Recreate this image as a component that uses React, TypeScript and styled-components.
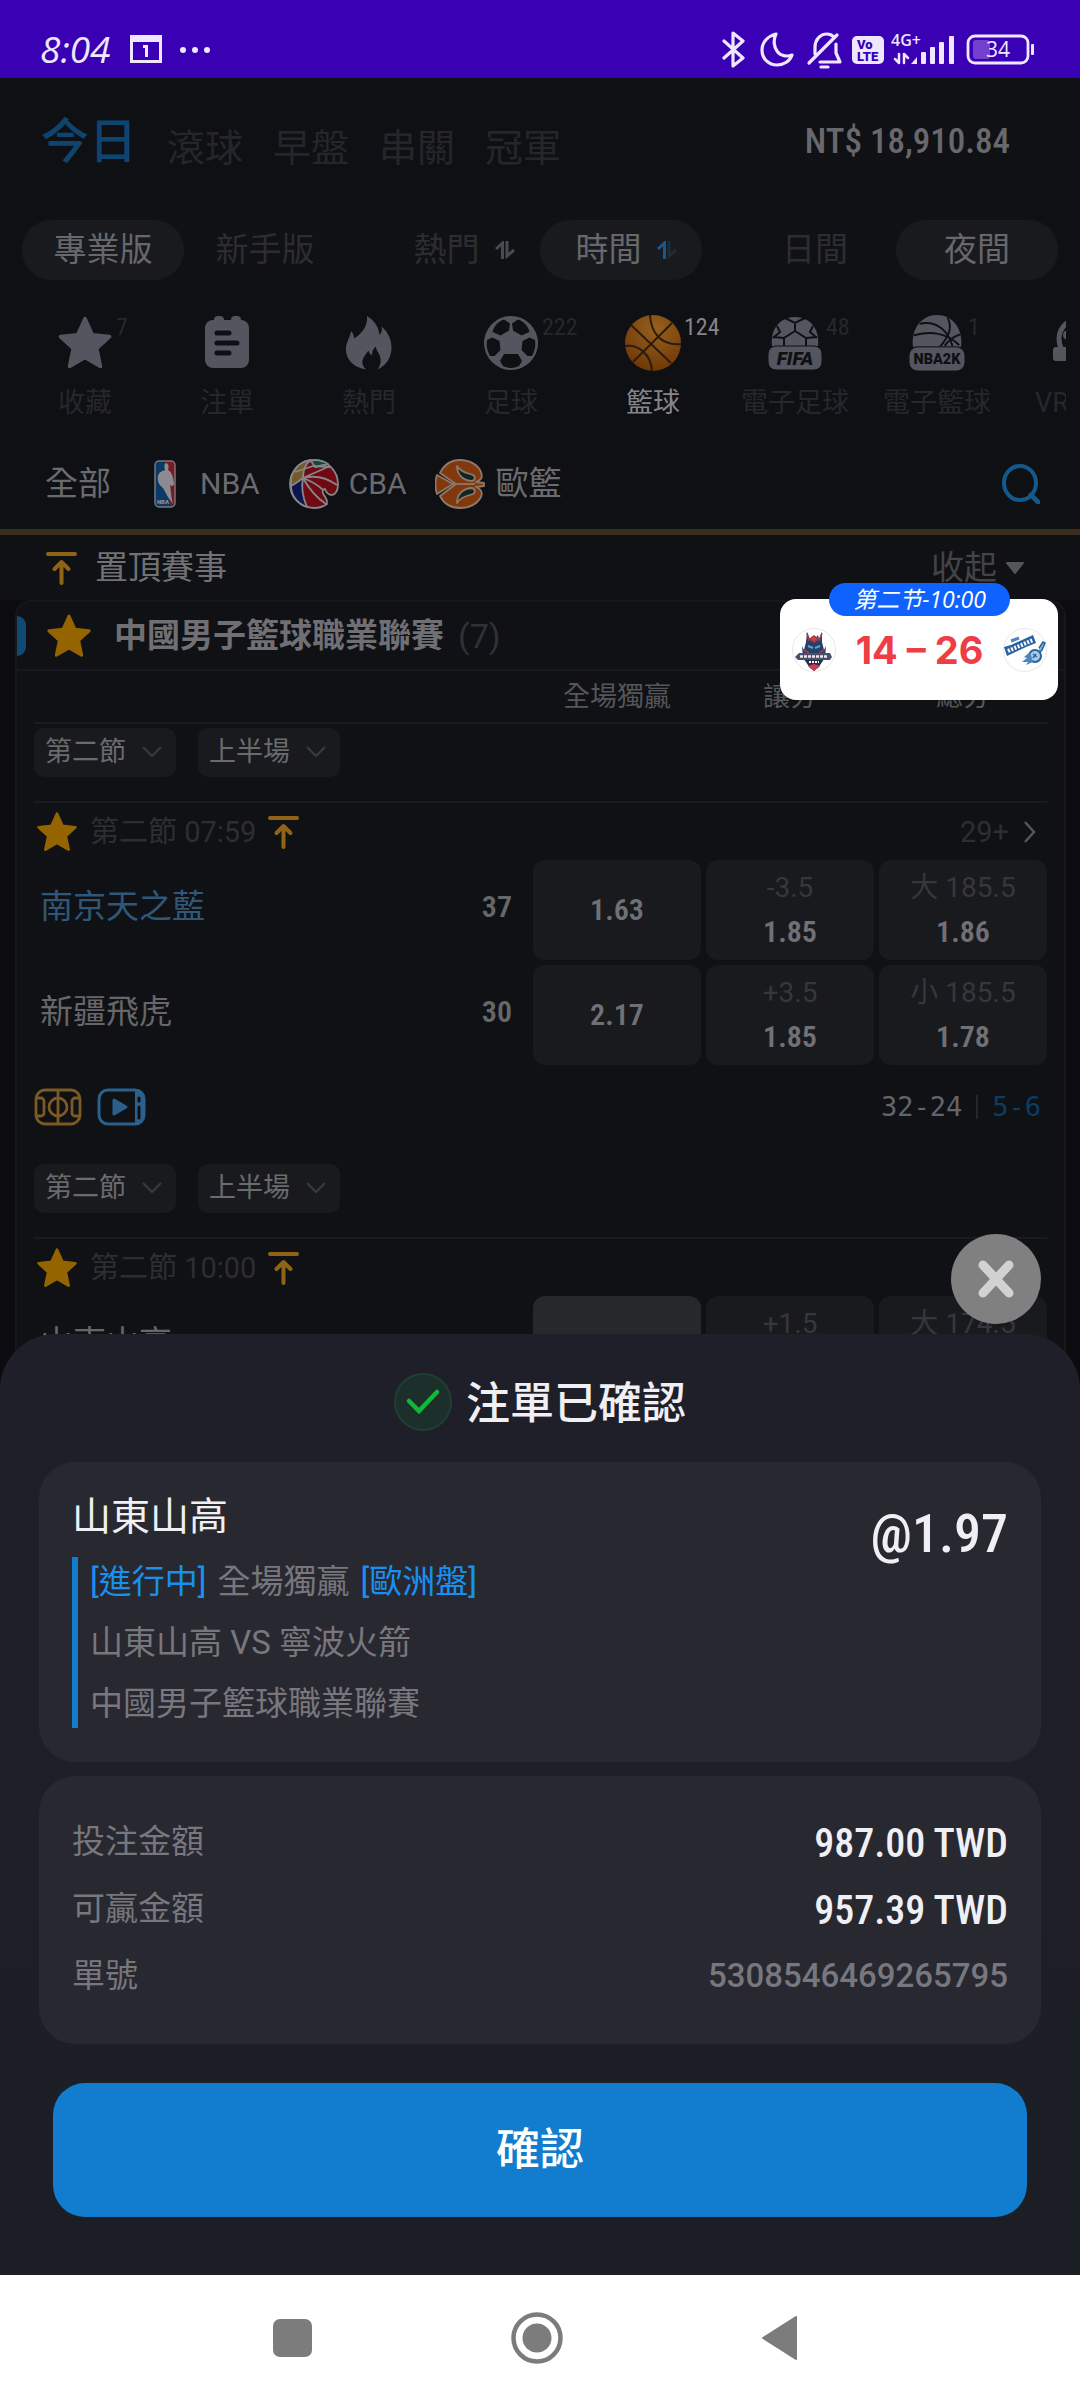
import React from "react";
import styled, { createGlobalStyle, css } from "styled-components";

const SANS = 'Roboto, "Noto Sans CJK TC", sans-serif';
const NARROW = '"Liberation Sans Narrow", "Roboto Condensed", Roboto, "Noto Sans CJK TC", sans-serif';

const Global = createGlobalStyle`
  * { box-sizing: border-box; }
  html, body { margin: 0; padding: 0; background: #0c0c10; }
  body { font-family: ${SANS}; color: #626267; }
  button, select { font-family: inherit; border: 0; background: none; padding: 0; margin: 0; color: inherit; }
  a { text-decoration: none; color: inherit; }
  svg { display: block; flex: none; }
  h1, h2, h3, p, dl, dd, dt { margin: 0; font-weight: 400; }
`;

/* ---------- shell ---------- */

const Phone = styled.div`
  min-height: 100vh;
  display: flex;
  flex-direction: column;
`;

const StatusBar = styled.header`
  height: 78px;
  flex: none;
  padding: 20px 46px 0 40px;
  display: flex;
  justify-content: space-between;
  background: #3a00b3;
  color: #efe6ff;
`;

const StatusGroup = styled.div`
  height: 58px;
  display: flex;
  align-items: center;
  gap: 20px;
`;

const Clock = styled.span`
  font: italic 400 37px/58px "Open Sans", sans-serif;
`;

const Stage = styled.main`
  flex: 1;
  display: grid;
  position: relative;
  overflow: hidden;
`;

const Page = styled.div`
  grid-area: 1 / 1;
  min-width: 0;
  background: #0c0c10;
`;

const Top = styled.div`
  background: #0f1014;
`;

/* ---------- header ---------- */

const Header = styled.div`
  height: 139px;
  padding: 34px 30px 0 41px;
  display: flex;
  justify-content: space-between;
  align-items: flex-start;
`;

const DayTabs = styled.nav`
  display: flex;
  align-items: flex-end;
  gap: 30px;
`;

const DayTab = styled.a<{ $active?: boolean }>`
  font-size: 38px;
  line-height: 48px;
  color: #25262a;
  ${(p) =>
    p.$active &&
    css`
      font-size: 48px;
      line-height: 60px;
      font-weight: 500;
      color: #0e4470;
    `}
`;

const Balance = styled.div`
  padding: 0 40px 0 25px;
  border-radius: 32px;
  background: #101115;
  font: 500 35px/60px ${NARROW};
  color: #68686d;
`;

const Toggles = styled.div`
  padding: 0 19px;
  display: grid;
  grid-template-columns: repeat(3, minmax(0, 1fr));
  gap: 26px;
`;

const Toggle = styled.div`
  padding: 3px;
  display: grid;
  grid-template-columns: 1fr 1fr;
  border-radius: 33px;
  background: #101115;
`;

const ToggleItem = styled.button<{ $active?: boolean; $sortable?: boolean }>`
  height: 60px;
  padding-left: ${(p) => (p.$sortable ? 10 : 0)}px;
  display: flex;
  align-items: center;
  justify-content: center;
  gap: 15px;
  border-radius: 30px;
  font-size: 33px;
  line-height: 60px;
  color: ${(p) => (p.$active ? "#67676c" : "#2c2d31")};
  background: ${(p) => (p.$active ? "#191a1e" : "transparent")};
`;

/* ---------- sports ---------- */

const Sports = styled.nav`
  margin: 0 14px;
  padding-top: 32px;
  display: flex;
  overflow: hidden;
`;

const Sport = styled.a<{ $active?: boolean }>`
  position: relative;
  flex: 0 0 142px;
  display: flex;
  flex-direction: column;
  align-items: center;
  gap: 14px;
  font-size: 27px;
  line-height: 36px;
  white-space: nowrap;
  color: ${(p) => (p.$active ? "#85858a" : "#26272b")};
`;

const Count = styled.span`
  position: absolute;
  left: 102px;
  top: 0;
  font: 400 24px/24px ${NARROW};
`;

const Leagues = styled.div`
  height: 114px;
  padding: 18px 40px 0 45px;
  display: flex;
  align-items: center;
  justify-content: space-between;
  border-bottom: 6px solid #3a2f1e;
`;

const LeagueList = styled.nav`
  display: flex;
  align-items: center;
  gap: 29px;
`;

const League = styled.a<{ $latin?: boolean; $gap?: number; $inset?: number }>`
  display: flex;
  align-items: center;
  gap: ${(p) => p.$gap ?? 10}px;
  padding-left: ${(p) => p.$inset ?? 0}px;
  font-size: ${(p) => (p.$latin ? 30 : 33)}px;
  line-height: 40px;
  color: #6a6a6f;
`;

const Pinned = styled.div`
  height: 65px;
  padding: 0 56px 0 46px;
  display: flex;
  align-items: center;
  gap: 18px;
  background: #101115;
  color: #717176;
`;

const PinnedTitle = styled.h2`
  flex: 1;
  font-size: 33px;
  line-height: 60px;
`;

const Fold = styled.button`
  display: flex;
  align-items: center;
  gap: 9px;
  font-size: 33px;
  line-height: 60px;
  color: #434448;
`;

/* ---------- league card ---------- */

const Card = styled.section`
  margin: 0 14px 0 15px;
  border: 2px solid #15171b;
  border-bottom: 0;
  border-radius: 16px 16px 0 0;
  overflow: hidden;
  background: #0f1114;
`;

const CardTitle = styled.div`
  height: 69px;
  display: flex;
  align-items: center;
  border-bottom: 2px solid #17191d;

  &::before {
    content: "";
    width: 9px;
    height: 40px;
    margin-right: 20px;
    border-radius: 0 9px 9px 0;
    background: #0f4a75;
  }
`;

const CardName = styled.h3`
  margin-left: 22px;
  font-size: 33px;
  line-height: 60px;
  font-weight: 700;
  color: #6f6f74;
`;

const Total = styled.span`
  margin-left: 14px;
  font-size: 34px;
  line-height: 60px;
  color: #303135;
`;

const Columns = styled.div`
  margin: 0 17px;
  display: grid;
  grid-template-columns: minmax(0, 1fr) repeat(3, 168px);
  gap: 5px;
`;

const ColumnHead = styled(Columns)`
  height: 53px;
  border-bottom: 2px solid #191b1f;
  font-size: 27px;
  line-height: 52px;
  text-align: center;
  color: #55565a;
`;

const Periods = styled.div<{ $top: number }>`
  margin: 0 17px;
  padding: ${(p) => p.$top}px 0 24px;
  display: flex;
  gap: 22px;
  border-bottom: 2px solid #191b1f;
`;

const PeriodBox = styled.label`
  position: relative;
  display: block;

  svg {
    position: absolute;
    right: 14px;
    top: 18px;
    pointer-events: none;
  }
`;

const PeriodSelect = styled.select`
  appearance: none;
  display: block;
  width: 142px;
  height: 49px;
  padding: 0 0 0 11px;
  border-radius: 10px;
  background: #191a1e;
  font-size: 27px;
  line-height: 49px;
  color: #6a6a6f;
`;

const MatchHead = styled.div`
  height: 57px;
  padding: 0 28px 0 19px;
  display: flex;
  align-items: center;
  gap: 12px;
  font-size: 29px;
  line-height: 40px;
  color: #2d2e32;
`;

const More = styled.a`
  margin-left: auto;
  display: flex;
  align-items: center;
  gap: 15px;
`;

const Team = styled.div<{ $home?: boolean }>`
  height: 94px;
  padding: 0 16px 0 6px;
  display: flex;
  align-items: center;
  justify-content: space-between;
  font-size: 33px;
  line-height: 40px;
  color: ${(p) => (p.$home ? "#2f5878" : "#66676b")};
`;

const Points = styled.span`
  font: 600 30px/40px ${NARROW};
  color: #66676b;
`;

const Odds = styled.button<{ $picked?: boolean }>`
  height: 100px;
  display: flex;
  flex-direction: column;
  align-items: center;
  justify-content: center;
  border-radius: 12px;
  background: ${(p) => (p.$picked ? "#27282b" : "#191a1e")};
`;

const Line = styled.span`
  font-size: 28px;
  line-height: 44px;
  color: #36373b;
`;

const Price = styled.span`
  font: 600 30px/44px ${NARROW};
  color: #707075;
`;

const MatchFoot = styled.div`
  height: 84px;
  padding: 0 23px 0 17px;
  display: flex;
  align-items: center;
  gap: 15px;
`;

const Quarters = styled.div`
  margin-left: auto;
  display: flex;
  align-items: center;
  gap: 14px;
  font: 400 27px/40px "DejaVu Sans Mono", monospace;
  color: #64656a;
`;

const Rule = styled.span`
  width: 2px;
  height: 24px;
  background: #25262a;
`;

const Current = styled.span`
  color: #0d3c63;
`;

/* ---------- floating score ---------- */

const Floating = styled.aside`
  position: absolute;
  top: 521px;
  right: 22px;
  width: 278px;
  height: 101px;
  padding: 29px 11px 0 12px;
  display: flex;
  justify-content: space-between;
  align-items: flex-start;
  border-radius: 16px;
  background: #fff;
`;

const FloatingTime = styled.span`
  position: absolute;
  top: -16px;
  left: 49px;
  width: 181px;
  height: 33px;
  border-radius: 17px;
  background: #1062fe;
  color: #fff;
  text-align: center;
  font: italic 400 23px/33px "Open Sans", "Noto Sans CJK SC", sans-serif;
`;

const FloatingScore = styled.strong`
  font: 700 38px/44px Inter, sans-serif;
  color: #ee3d45;
`;

/* ---------- bet slip ---------- */

const Sheet = styled.section`
  grid-area: 1 / 1;
  align-self: end;
  position: relative;
  min-width: 0;
  padding: 38px 39px 58px;
  border-radius: 56px 56px 0 0;
  background: linear-gradient(#1f1f29, #1c1e26);
  color: #efeff4;
`;

const Close = styled.button`
  position: absolute;
  top: -100px;
  right: 39px;
  width: 90px;
  height: 90px;
  display: grid;
  place-items: center;
  border-radius: 45px;
  background: #808080;
`;

const SheetTitle = styled.div`
  height: 60px;
  margin-bottom: 30px;
  display: flex;
  align-items: center;
  justify-content: center;
  gap: 14px;
`;

const SheetName = styled.h1`
  padding-top: 4px;
  font-size: 44px;
  line-height: 60px;
  font-weight: 500;
`;

const Panel = styled.div`
  border-radius: 36px;
  background: #282831;
`;

const Bet = styled(Panel)`
  margin-bottom: 14px;
  padding: 30px 33px 34px;
  display: flex;
  justify-content: space-between;
`;

const Pick = styled.h2`
  margin-bottom: 15px;
  font-size: 39px;
  line-height: 50px;
`;

const BetInfo = styled.div`
  padding: 6px 0 6px 12px;
  display: grid;
  gap: 24px;
  border-left: 6px solid #127cce;
  font-size: 33px;
  line-height: 37px;
  color: #77777d;
`;

const BetLine = styled.p`
  display: flex;
  gap: 11px;
`;

const Accent = styled.span`
  color: #1890f0;
`;

const BetPrice = styled.strong`
  margin-top: 12px;
  font: 500 54px/60px ${NARROW};
`;

const Amounts = styled(Panel).attrs({ as: "dl" })`
  padding: 32px 33px 35px;
`;

const Amount = styled.div`
  height: 67px;
  display: flex;
  align-items: center;
  justify-content: space-between;
  font-size: 33px;
  line-height: 60px;
  color: #77777d;
`;

const Money = styled.dd`
  padding-top: 4px;
  font: 500 40px/60px ${NARROW};
  color: #efeff4;
`;

const Serial = styled.dd`
  font-weight: 500;
`;

const Confirm = styled.button`
  width: calc(100% - 28px);
  height: 134px;
  margin: 39px 14px 0;
  padding-bottom: 8px;
  display: block;
  border-radius: 32px;
  background: #127cce;
  font-size: 44px;
  font-weight: 500;
  color: #fff;
`;

const SystemNav = styled.nav`
  flex: none;
  height: 126px;
  padding: 0 283px 0 273px;
  display: flex;
  align-items: center;
  justify-content: space-between;
  background: #fff;
`;

/* ---------- icons ---------- */

const GOLD = "#8f6416";
const GREY = "#55555f";

const Star = ({ size, color }: { size: number; color: string }) => (
  <svg width={size} height={size} viewBox="0 0 24 24" fill={color} stroke={color} strokeWidth="1.6" strokeLinejoin="round">
    <path d="M12 1.6l3.1 6.9 7.4.8-5.5 5 1.6 7.7-6.6-3.8L5.400 22 7 14.300 1.500 9.300l7.400-.8z" />
  </svg>
);

const PinTop = () => (
  <svg width="31" height="34" viewBox="0 0 31 34" fill="none" stroke={GOLD} strokeWidth="4" strokeLinecap="round" strokeLinejoin="round">
    <path d="M2 3h27" />
    <path d="M15.500 32V12M8.500 18l7-7 7 7" />
  </svg>
);

const Sort = ({ color, down }: { color: string; down: string }) => (
  <svg width="20" height="18" viewBox="0 0 20 18" fill="none" strokeWidth="3">
    <path d="M1 8l6.500-6v16" stroke={color} />
    <path d="M12 0v15l7-6" stroke={down} />
  </svg>
);

const Chevron = () => (
  <svg width="20" height="12" viewBox="0 0 20 12" fill="none" stroke="#3a3b3f" strokeWidth="2">
    <path d="M1 1l9 9 9-9" />
  </svg>
);

const Slip = () => (
  <svg width="56" height="56" viewBox="0 0 56 56">
    <rect x="6" y="5" width="44" height="48" rx="8" fill={GREY} />
    <rect x="15" y="1" width="10" height="10" rx="4" fill={GREY} />
    <rect x="32" y="1" width="10" height="10" rx="4" fill={GREY} />
    <path d="M18 18h12M18 28h20M18 38h12" stroke="#0f1014" strokeWidth="5" strokeLinecap="round" />
  </svg>
);

const Flame = () => (
  <svg width="56" height="56" viewBox="0 0 56 56" fill={GREY}>
    <path d="M26 1c8 5 12 12 12.500 19 2-2 3-5 2-8.500C47 17 51 25 50.500 34c-.5 9-5 16-14 20.500 3-4 4-8 2.500-13-1-4-4-6-4-10-3 2-4 5-4 9-2-1-3-3-3.500-5-3 4-7 9-6 13 .4 2.500 2 4.500 3.500 6C13 52 6 46 5 36c-.8-8 4-13 5-20 2 2 3 4.500 3 7.500C20 19 27 12 26 1z" />
  </svg>
);

const Soccer = () => (
  <svg width="56" height="56" viewBox="0 0 56 56">
    <circle cx="28" cy="28" r="27" fill={GREY} />
    <g fill="#0f1014">
      <path d="M21 4.500l6 4-1 7-8.500 5-8-3.500C11 11 15 6.500 21 4.500z" />
      <path d="M35 4.500l-6 4 1 7 8.500 5 8-3.500C45 11 41 6.500 35 4.500z" />
      <path d="M4 25l5.500-2.500 7 3.500 1 9-6 6H7C4 36 3 30 4 25z" />
      <path d="M52 25l-5.500-2.500-7 3.500-1 9 6 6H49c3-5 4-11 3-16z" />
      <path d="M21 39h14l4 7-3 5c-5 2.500-11 2.500-16 0l-3-5z" />
    </g>
  </svg>
);

const Basketball = () => (
  <svg width="56" height="56" viewBox="0 0 56 56">
    <defs>
      <radialGradient id="ball" cx="0.55" cy="0.25" r="0.8">
        <stop offset="0" stopColor="#96601f" />
        <stop offset="1" stopColor="#6e3604" />
      </radialGradient>
    </defs>
    <circle cx="28" cy="28" r="28" fill="url(#ball)" />
    <path d="M6 10l40 38M47 8L8 47M25 0c1 18 11 31 31 29M0 31c13-2 26 8 27 25" fill="none" stroke="#2b1c12" strokeWidth="2" />
  </svg>
);

const Fifa = () => (
  <svg width="56" height="56" viewBox="0 0 56 56">
    <path d="M5 31C3 14 13 2 28 2s25 12 23 29z" fill={GREY} />
    <path d="M28 7v9M18 3l10 5 10-5M28 16l11 7M28 16l-11 7v8M39 23v8M17 23L6 22M39 23l11-1M10 11l3 6-7 6M46 11l-3 6 7 6" fill="none" stroke="#0f1014" strokeWidth="2" />
    <rect x="1" y="31" width="54" height="24" rx="8" fill={GREY} stroke="#0f1014" strokeWidth="1" />
    <text x="28" y="50" textAnchor="middle" fontFamily="Roboto, sans-serif" fontStyle="italic" fontWeight="900" fontSize="19" fill="#0f1014">FIFA</text>
  </svg>
);

const Nba2k = () => (
  <svg width="56" height="56" viewBox="0 0 58 58">
    <path d="M4 33C2 14 13 0 29 0s27 14 25 33z" fill={GREY} />
    <path d="M5 21c16-4 32-4 47 10M11 9c18-4 30 8 34 23M40 3c4 8 4 16-8 30M53 20c-6 2-12 6-16 12" fill="none" stroke="#0f1014" strokeWidth="2" />
    <rect x="0" y="33" width="58" height="25" rx="9" fill={GREY} stroke="#0f1014" strokeWidth="1" />
    <text x="29" y="51" textAnchor="middle" fontFamily="Roboto, sans-serif" fontWeight="900" fontSize="15" fill="#0f1014">NBA2K</text>
  </svg>
);

const VrBall = () => (
  <svg width="56" height="56" viewBox="0 0 56 56">
    <circle cx="28" cy="24" r="20" fill="none" stroke={GREY} strokeWidth="5" />
    <circle cx="17" cy="20" r="5" fill={GREY} />
    <rect x="2" y="32" width="52" height="14" rx="3" fill={GREY} />
  </svg>
);

const NbaLogo = () => (
  <svg width="22" height="48" viewBox="0 0 22 48">
    <rect x="1" y="1" width="20" height="46" rx="4" fill="#0c3a66" />
    <path d="M11 1h6a4 4 0 014 4v38a4 4 0 01-4 4c-1-8-3-14-5-18z" fill="#7a1a20" />
    <path d="M12 3c3 1 3 4 2 7 4 2 5 7 6 13 0 3-2 4-4 2 1 6 1 12 3 19-4-5-7-10-10-16-4-3-6-7-5-12 1-4 4-5 7-6-1-3-1-6 1-7z" fill="#8b8b90" />
    <rect x="1" y="1" width="20" height="46" rx="4" fill="none" stroke="#77777c" strokeWidth="1.500" />
    <text x="9" y="44" textAnchor="middle" fontFamily="Roboto, sans-serif" fontWeight="900" fontSize="6" fill="#8b8b90">NBA</text>
  </svg>
);

/* A ball whose lower right edge is bitten out by a hooked notch. */
const CbaLogo = () => (
  <svg width="50" height="50" viewBox="0 0 50 50" stroke="#86868a" strokeWidth="1.800" strokeLinejoin="round">
    <path d="M25 1A24 24 0 0149 25c0 6-2 10-6 11-4 0-6-3-7-6-2 0-3 2-2 4 1 4 5 5 4 11C34 48 30 49 25 49A24 24 0 0125 1z" fill="#700a12" />
    <path d="M2 19C5 8 13 2 22 1c-6 4-8 10-8 18L2 30z" fill="#75592a" />
    <path d="M2 27c4-2 8-5 12-8-2 10 0 20 4 29C9 45 2 37 2 27z" fill="#0b1650" />
    <path d="M22 2c6-2 12 0 17 3l-13 3z" fill="#0c4a3c" />
    <path d="M14 19L41 7M14 19c12-3 24 0 34 7M14 19c8 3 15 7 20 12M14 19c6 11 14 20 23 26M6 13l18-6 17 1" fill="none" />
  </svg>
);

/* Two lobes of a ball joined at the left, open towards the right. */
const EuroLogo = () => (
  <svg width="50" height="50" viewBox="0 0 50 50" stroke="#8f7868" strokeWidth="1.800" strokeLinejoin="round">
    <path d="M5 14C9 6 16 1 25 1c10 0 18 5 21 12 2 6 0 8-5 10l8 1v3l-8 1c5 2 7 5 5 10-4 7-11 11-21 11-9 0-16-4-20-12l16-12z" fill="#82380e" />
    <path d="M2 16l16 9L2 35c-2-6-2-13 0-19z" fill="#82380e" />
    <path d="M22 7c0 8 5 14 14 15 4 0 5-4 2-6-5-2-12-2-16-9zM22 44c0-8 5-14 14-15 4 0 5 4 2 6-5 2-12 2-16 9z" fill="#0f2426" />
    <path d="M18 25h22" fill="none" />
  </svg>
);

const Search = () => (
  <svg width="38" height="40" viewBox="0 0 38 40" fill="none" stroke="#135a8c" strokeWidth="4">
    <ellipse cx="18" cy="19" rx="16" ry="17" />
    <path d="M29 31l7 7" strokeWidth="5" strokeLinecap="round" />
  </svg>
);

const Court = () => (
  <svg width="48" height="38" viewBox="0 0 48 38" fill="none" stroke="#7b5a24" strokeWidth="2.800">
    <rect x="2" y="2" width="44" height="34" rx="9" />
    <path d="M24 2v34M2 10h5a3 3 0 013 3v12a3 3 0 01-3 3H2M46 10h-5a3 3 0 00-3 3v12a3 3 0 003 3h5" />
    <circle cx="24" cy="19" r="9" />
  </svg>
);

const Video = () => (
  <svg width="49" height="38" viewBox="0 0 49 38" fill="none" stroke="#2b5f8c" strokeWidth="3">
    <rect x="2" y="2" width="45" height="34" rx="9" />
    <path d="M39 2a8 8 0 018 8v18a8 8 0 01-8 8z" fill="#2b5f8c" strokeWidth="2" />
    <path d="M42 10v3M42 19v11" stroke="#0f1114" strokeLinecap="round" />
    <path d="M17 12l12 7-12 7z" fill="#2b5f8c" strokeLinejoin="round" />
  </svg>
);

const ShandongLogo = () => (
  <svg width="44" height="44" viewBox="0 0 44 44">
    <circle cx="22" cy="22" r="21.500" fill="#fff" stroke="#ece6e6" />
    <path d="M15 4l3 7 3-3 2 3 3-4 1 4 3-7v10l2 8 2-4-1 12-5 7-6 5-6-5-5-7-1-12 2 4 2-8z" fill="#27406a" />
    <path d="M18 11l4-3 4 3-4 3zM15 5l2 8M30 5l-3 8M12 22l5 3M32 22l-5 3" stroke="#a83a44" strokeWidth="1.500" fill="#c94545" />
    <path d="M16 18l5 2M28 18l-5 2" stroke="#5fa0c8" strokeWidth="2" />
    <path d="M3 29l4-4h31l2 4-2 3H6z" fill="#4a5068" />
    <path d="M8 28.500h28" stroke="#e8e8f0" strokeWidth="2.500" strokeDasharray="3 1" />
    <path d="M14 32h16l-3 7-5 4-5-4z" fill="#2a2c48" />
    <path d="M16 38l6-2 6 2-6 5z" fill="#cf3d55" />
    <path d="M17 34h10" stroke="#fff" strokeWidth="2" strokeDasharray="2 1" />
  </svg>
);

const RocketsLogo = () => (
  <svg width="44" height="44" viewBox="0 0 44 44">
    <circle cx="22" cy="22" r="21.500" fill="#fff" stroke="#ece6e6" />
    <path d="M1 19l7-2L30 7l3 8-10 4-19 9z" fill="#2a62a0" />
    <path d="M5 23l25-11" stroke="#fff" strokeWidth="4" strokeDasharray="2 1.500" />
    <path d="M8 13l8-3" stroke="#4d86bd" strokeWidth="3" />
    <path d="M36 20l4-6 2 1-3 7-3 3" fill="#7fb5dc" stroke="#2a62a0" strokeWidth="1.500" />
    <circle cx="32" cy="28" r="6" fill="#a9cbe6" stroke="#2a62a0" strokeWidth="2" />
    <path d="M27 24l-6 5 3 1-5 4h6l-2 3 7-3" fill="#4d86bd" />
    <path d="M30 26l4 3M30 30l3-4" stroke="#2a62a0" strokeWidth="1.500" />
  </svg>
);

const StatusIcons = () => (
  <svg width="312" height="40" viewBox="722 28 312 40" fill="none" stroke="#efe6ff" strokeWidth="3.200" strokeLinejoin="round" strokeLinecap="round">
    <path d="M724 40l19 17-10 8V32l10 8-19 17" />
    <path d="M776 33c-8 2-14 8-14 16 0 9 7 15 15 15 7 0 13-4 15-10-5 2-12 1-15-4-3-4-4-11-1-17z" />
    <path d="M815 53V46c0-7 5-13 12-13 3 0 5 1 7 3M836 43v9l4 9H820M837 34l-28 28M821 66h7" />
    <rect x="852" y="35" width="32" height="28" rx="5" fill="#efe6ff" stroke="none" />
    <g fill="#3a00b3" stroke="none" fontFamily="Roboto, sans-serif" fontWeight="900">
      <text x="857" y="48" fontSize="13">Vo</text>
      <text x="857" y="60" fontSize="13">LTE</text>
    </g>
    <text x="891" y="45" fill="#efe6ff" stroke="none" fontFamily="Open Sans, sans-serif" fontWeight="600" fontSize="16">4G+</text>
    <path d="M899 53v9l-4-4M904 62v-9l4 4" strokeWidth="2.500" />
    <g fill="#efe6ff" stroke="none">
      <path d="M911 63l6-7v7z" />
      <rect x="921" y="51" width="5" height="12" rx="1" />
      <rect x="930" y="46" width="5" height="17" rx="1" />
      <rect x="939" y="41" width="5" height="22" rx="1" />
      <rect x="949" y="35" width="5" height="28" rx="1" />
      <rect x="1031" y="43" width="3" height="11" rx="1" />
    </g>
    <rect x="973" y="39" width="17" height="19" rx="3" fill="#7440cf" stroke="none" />
    <rect x="968" y="35" width="60" height="27" rx="7" strokeWidth="2.800" />
    <text x="998" y="56" textAnchor="middle" fill="#efe6ff" stroke="none" fontFamily="Open Sans, sans-serif" fontSize="21">34</text>
  </svg>
);

const CalendarIcon = () => (
  <svg width="80" height="32" viewBox="0 0 80 32" fill="#efe6ff">
    <path d="M0 2h32v28H0zM3 9v18h26V9z" fillRule="evenodd" />
    <path d="M13 12h5v12h-3V15h-2z" />
    <circle cx="53" cy="17" r="3" />
    <circle cx="65" cy="17" r="3" />
    <circle cx="77" cy="17" r="3" />
  </svg>
);

/* ---------- data ---------- */

const sports = [
  { name: "收藏", icon: <Star size={56} color={GREY} />, count: "7" },
  { name: "注單", icon: <Slip /> },
  { name: "熱門", icon: <Flame /> },
  { name: "足球", icon: <Soccer />, count: "222" },
  { name: "籃球", icon: <Basketball />, count: "124", active: true },
  { name: "電子足球", icon: <Fifa />, count: "48" },
  { name: "電子籃球", icon: <Nba2k />, count: "1" },
  { name: "VR足球", icon: <VrBall /> },
];

type Cell = { line?: string; price?: string; picked?: boolean };
type Side = { team: string; points?: string; cells: Cell[] };

const nanjing: Side[] = [
  { team: "南京天之藍", points: "37", cells: [{ price: "1.63" }, { line: "-3.5", price: "1.85" }, { line: "大 185.5", price: "1.86" }] },
  { team: "新疆飛虎", points: "30", cells: [{ price: "2.17" }, { line: "+3.5", price: "1.85" }, { line: "小 185.5", price: "1.78" }] },
];

const shandong: Side[] = [
  { team: "山東山高", cells: [{ picked: true }, { line: "+1.5", price: "1.85" }, { line: "大 174.5", price: "1.85" }] },
];

const PeriodRow = ({ top }: { top: number }) => (
  <Periods $top={top}>
    {["第二節", "上半場"].map((p) => (
      <PeriodBox key={p}>
        <PeriodSelect aria-label={p} defaultValue={p}>
          <option>{p}</option>
        </PeriodSelect>
        <Chevron />
      </PeriodBox>
    ))}
  </Periods>
);

const MatchTop = ({ time, more }: { time: string; more?: string }) => (
  <MatchHead>
    <Star size={42} color="#946400" />
    <span>第二節 {time}</span>
    <PinTop />
    {more && (
      <More href="#more">
        {more}
        <svg width="12" height="22" viewBox="0 0 12 22" fill="none" stroke="#55565a" strokeWidth="2.500">
          <path d="M1 1l9 10-9 10" />
        </svg>
      </More>
    )}
  </MatchHead>
);

const Board = ({ sides }: { sides: Side[] }) => (
  <Columns>
    {sides.map((s, i) => (
      <React.Fragment key={s.team}>
        <Team $home={i === 0 && !!s.points}>
          <span>{s.team}</span>
          <Points>{s.points}</Points>
        </Team>
        {s.cells.map((c, j) => (
          <Odds key={j} $picked={c.picked} aria-label={`${s.team} ${j + 1}`}>
            {c.line && <Line>{c.line}</Line>}
            {c.price && <Price>{c.price}</Price>}
          </Odds>
        ))}
      </React.Fragment>
    ))}
  </Columns>
);

export default function App() {
  return (
    <Phone>
      <Global />
      <StatusBar>
        <StatusGroup>
          <Clock>8:04</Clock>
          <CalendarIcon />
        </StatusGroup>
        <StatusGroup>
          <StatusIcons />
        </StatusGroup>
      </StatusBar>

      <Stage>
        <Page>
          <Top>
            <Header>
              <DayTabs>
                <DayTab href="#today" $active>今日</DayTab>
                {["滾球", "早盤", "串關", "冠軍"].map((t) => (
                  <DayTab key={t} href="#tab">{t}</DayTab>
                ))}
              </DayTabs>
              <Balance>NT$ 18,910.84</Balance>
            </Header>

            <Toggles>
              <Toggle>
                <ToggleItem $active>專業版</ToggleItem>
                <ToggleItem>新手版</ToggleItem>
              </Toggle>
              <Toggle>
                <ToggleItem $sortable>熱門<Sort color="#4a4b50" down="#4a4b50" /></ToggleItem>
                <ToggleItem $sortable $active>時間<Sort color="#1a578a" down="#1d2c3a" /></ToggleItem>
              </Toggle>
              <Toggle>
                <ToggleItem>日間</ToggleItem>
                <ToggleItem $active>夜間</ToggleItem>
              </Toggle>
            </Toggles>

            <Sports>
              {sports.map((s) => (
                <Sport key={s.name} href="#sport" $active={s.active}>
                  {s.icon}
                  <span>{s.name}</span>
                  {s.count && <Count>{s.count}</Count>}
                </Sport>
              ))}
            </Sports>

            <Leagues>
              <LeagueList>
                <League href="#all">全部</League>
                <League href="#nba" $latin $gap={24} $inset={14}><NbaLogo />NBA</League>
                <League href="#cba" $latin><CbaLogo />CBA</League>
                <League href="#euro"><EuroLogo />歐籃</League>
              </LeagueList>
              <button aria-label="搜尋"><Search /></button>
            </Leagues>
          </Top>

          <Pinned>
            <PinTop />
            <PinnedTitle>置頂賽事</PinnedTitle>
            <Fold>
              收起
              <svg width="18" height="14" viewBox="0 0 18 14" fill="#55565a" stroke="#55565a" strokeWidth="2" strokeLinejoin="round">
                <path d="M1 2h16l-8 10z" />
              </svg>
            </Fold>
          </Pinned>

          <Card>
            <CardTitle>
              <Star size={46} color="#946400" />
              <CardName>中國男子籃球職業聯賽</CardName>
              <Total>(7)</Total>
            </CardTitle>
            <ColumnHead>
              <span />
              <span>全場獨贏</span>
              <span>讓分</span>
              <span>總分</span>
            </ColumnHead>
            <PeriodRow top={4} />
            <MatchTop time="07:59" more="29+" />
            <Board sides={nanjing} />
            <MatchFoot>
              <Court />
              <Video />
              <Quarters>
                <span>32-24</span>
                <Rule />
                <Current>5-6</Current>
              </Quarters>
            </MatchFoot>
            <PeriodRow top={15} />
            <MatchTop time="10:00" />
            <Board sides={shandong} />
          </Card>
        </Page>

        <Floating>
          <FloatingTime>第二节-10:00</FloatingTime>
          <ShandongLogo />
          <FloatingScore>14 – 26</FloatingScore>
          <RocketsLogo />
        </Floating>

        <Sheet>
          <Close aria-label="關閉">
            <svg width="36" height="38" viewBox="0 0 36 38" stroke="#d2d2d4" strokeWidth="9" strokeLinecap="round">
              <path d="M5 5l26 28M31 5L5 33" />
            </svg>
          </Close>
          <SheetTitle>
            <svg width="58" height="60" viewBox="0 0 58 60" fill="none">
              <circle cx="29" cy="30" r="28" fill="#1d2f2a" stroke="#1f3f33" strokeWidth="2" />
              <path d="M15 29l10 10 18-19" stroke="#0fb936" strokeWidth="4.500" strokeLinecap="round" />
            </svg>
            <SheetName>注單已確認</SheetName>
          </SheetTitle>

          <Bet>
            <div>
              <Pick>山東山高</Pick>
              <BetInfo>
                <BetLine><Accent>[進行中]</Accent><span>全場獨贏</span><Accent>[歐洲盤]</Accent></BetLine>
                <p>山東山高 VS 寧波火箭</p>
                <p>中國男子籃球職業聯賽</p>
              </BetInfo>
            </div>
            <BetPrice>@1.97</BetPrice>
          </Bet>

          <Amounts>
            <Amount><dt>投注金額</dt><Money>987.00 TWD</Money></Amount>
            <Amount><dt>可贏金額</dt><Money>957.39 TWD</Money></Amount>
            <Amount><dt>單號</dt><Serial>5308546469265795</Serial></Amount>
          </Amounts>

          <Confirm>確認</Confirm>
        </Sheet>
      </Stage>

      <SystemNav>
        <button aria-label="最近">
          <svg width="39" height="38" viewBox="0 0 39 38"><rect width="39" height="38" rx="7" fill="#7c7c7c" /></svg>
        </button>
        <button aria-label="主畫面">
          <svg width="52" height="52" viewBox="0 0 52 52">
            <circle cx="26" cy="26" r="23.500" fill="none" stroke="#7c7c7c" strokeWidth="4.500" />
            <circle cx="26" cy="26" r="14.500" fill="#7c7c7c" />
          </svg>
        </button>
        <button aria-label="返回">
          <svg width="36" height="44" viewBox="0 0 36 44" fill="#7c7c7c" stroke="#7c7c7c" strokeWidth="2" strokeLinejoin="round">
            <path d="M2 22L35 1v42z" />
          </svg>
        </button>
      </SystemNav>
    </Phone>
  );
}
